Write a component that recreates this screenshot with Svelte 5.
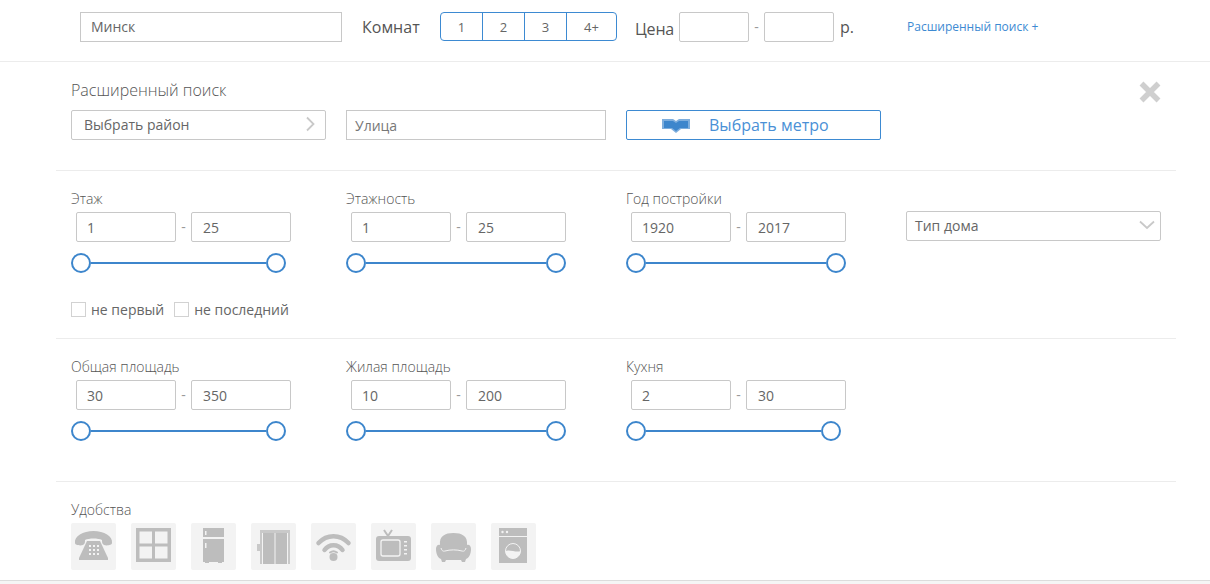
<script>
  const row1 = [
    { label: 'Этаж', from: '1', to: '25', size: 'sm' },
    { label: 'Этажность', from: '1', to: '25', size: 'lg' },
    { label: 'Год постройки', from: '1920', to: '2017', size: 'lg' }
  ];
  const row2 = [
    { label: 'Общая площадь', from: '30', to: '350', size: 'sm' },
    { label: 'Жилая площадь', from: '10', to: '200', size: 'lg' },
    { label: 'Кухня', from: '2', to: '30', size: 'sm' }
  ];
</script>

{#snippet range(f)}
  <div class="field">
    <div class="flabel">{f.label}</div>
    <div class="pair">
      <div class="box num">{f.from}</div>
      <span class="dash">-</span>
      <div class="box num">{f.to}</div>
    </div>
    <div class="slider {f.size}">
      <span class="knob"></span><span class="line"></span><span class="knob"></span>
    </div>
  </div>
{/snippet}

<div class="page">
  <header class="top">
    <div class="box city">Минск</div>
    <span class="big rooms">Комнат</span>
    <div class="group">
      <span>1</span><span>2</span><span>3</span><span>4+</span>
    </div>
    <span class="big price">Цена</span>
    <div class="box pricebox"></div>
    <span class="dash pdash">-</span>
    <div class="box pricebox"></div>
    <span class="big rub">р.</span>
    <a class="adv" href="#top">Расширенный поиск +</a>
  </header>

  <main class="panel">
    <section class="s-head">
      <div class="title">Расширенный поиск</div>
      <svg class="close" viewBox="0 0 22 22" width="22" height="22" aria-hidden="true">
        <path d="M2.500 2.500L19.500 19.500M19.500 2.500L2.500 19.500" stroke="#cfcfcf" stroke-width="5.500" fill="none"/>
      </svg>
      <div class="grid">
        <div class="box sel district">Выбрать район
          <svg viewBox="0 0 10 16" width="10" height="16" aria-hidden="true"><path d="M2 1.500L8.500 8L2 14.500" fill="none" stroke="#c9c9c9" stroke-width="1.800"/></svg>
        </div>
        <div class="box street">Улица</div>
        <div class="metro">
          <svg viewBox="0 0 28 15" width="28" height="15" aria-hidden="true">
            <path d="M0 1H11L14 3L17 1H28V11H19L14 15L9 11H0Z" fill="#7eaedd"/>
            <path d="M2 3H11L14 5L17 3H26V10H18L14 13L10 10H2Z" fill="#3d86cc"/>
          </svg>
          <span>Выбрать метро</span>
        </div>
      </div>
    </section>

    <section class="s-floors">
      <div class="grid">
        {#each row1 as f}{@render range(f)}{/each}
        <div class="box sel house">Тип дома
          <svg viewBox="0 0 16 10" width="16" height="10" aria-hidden="true"><path d="M1 1.500L8 8L15 1.500" fill="none" stroke="#c9c9c9" stroke-width="1.800"/></svg>
        </div>
      </div>
      <div class="checks">
        <span class="check"><i></i>не первый</span>
        <span class="check"><i></i>не последний</span>
      </div>
    </section>

    <section class="s-area">
      <div class="grid">
        {#each row2 as f}{@render range(f)}{/each}
      </div>
    </section>

    <section class="s-amen">
      <div class="flabel">Удобства</div>
      <div class="icons">
        <span class="ic"><svg viewBox="0 0 45 47" aria-hidden="true">
          <path d="M4 20C3 13 12 8 22.500 8S42 13 41 20C41 22 36 23 33 22C31 21 31 19 31 17C27 15 18 15 14 17C14 19 14 21 12 22C9 23 4 22 4 20Z" fill="#bdbdbd"/>
          <path d="M16 18H29L37 35V37H8V35Z" fill="#bdbdbd"/>
          <g fill="#f3f3f3"><rect x="18" y="22" width="2" height="2"/><rect x="22" y="22" width="2" height="2"/><rect x="26" y="22" width="2" height="2"/><rect x="18" y="26" width="2" height="2"/><rect x="22" y="26" width="2" height="2"/><rect x="26" y="26" width="2" height="2"/><rect x="18" y="30" width="2" height="2"/><rect x="22" y="30" width="2" height="2"/><rect x="26" y="30" width="2" height="2"/></g>
        </svg></span>
        <span class="ic"><svg viewBox="0 0 45 47" aria-hidden="true">
          <path fill-rule="evenodd" d="M5 5H40V39H5ZM8.500 8.500V20.500H21V8.500ZM24 8.500V20.500H36.500V8.500ZM8.500 23.500V35.500H21V23.500ZM24 23.500V35.500H36.500V23.500Z" fill="#bdbdbd"/>
        </svg></span>
        <span class="ic"><svg viewBox="0 0 45 47" aria-hidden="true">
          <path d="M12 5H33V14H12Z" fill="#bdbdbd"/>
          <path d="M12 16H33V39H31V40H27V39H18V40H14V39H12Z" fill="#bdbdbd"/>
          <rect x="14" y="8" width="1.500" height="4" fill="#f3f3f3"/><rect x="14" y="20" width="1.500" height="5" fill="#f3f3f3"/>
        </svg></span>
        <span class="ic"><svg viewBox="0 0 45 47" aria-hidden="true">
          <path d="M9 7H39V41H37V10H11V41H9Z" fill="#c9c9c9"/>
          <path d="M12 10H23.500V41H12ZM24.500 10H36V41H24.500Z" fill="#bdbdbd"/>
          <rect x="6" y="21" width="3" height="7" fill="#c9c9c9"/>
        </svg></span>
        <span class="ic"><svg viewBox="0 0 45 47" aria-hidden="true">
          <g fill="none" stroke="#bdbdbd" stroke-width="4.500" stroke-linecap="round">
            <path d="M7.500 20C16 11 29 11 37.500 20"/><path d="M13.500 27C18 20.500 27 20.500 31.500 27"/>
          </g>
          <circle cx="22.500" cy="34" r="4" fill="#bdbdbd"/>
          <path d="M19 29.500C21 28 24 28 26 29.500" fill="none" stroke="#bdbdbd" stroke-width="2" stroke-linecap="round"/>
        </svg></span>
        <span class="ic"><svg viewBox="0 0 45 47" aria-hidden="true">
          <path d="M13 7L17 13L21 7" fill="none" stroke="#bdbdbd" stroke-width="2"/>
          <rect x="5" y="13" width="35" height="25" rx="3" fill="#bdbdbd"/>
          <rect x="10" y="17" width="19" height="16" rx="2" fill="none" stroke="#f3f3f3" stroke-width="1.300"/>
          <g fill="#f3f3f3"><rect x="33" y="18" width="3" height="1.500"/><rect x="33" y="22" width="3" height="1.500"/><rect x="33" y="26" width="3" height="1.500"/><rect x="33" y="30" width="3" height="1.500"/></g>
        </svg></span>
        <span class="ic"><svg viewBox="0 0 45 47" aria-hidden="true">
          <path d="M9 22C8 13 14 10 22.500 10S37 13 36 22C38 21 40 23 40 26C40 31 38 35 35 36L34 39H31L30 37H15L14 39H11L10 36C7 35 5 31 5 26C5 23 7 21 9 22Z" fill="#bdbdbd"/>
          <path d="M10 25C11 28 12 28.500 14 28C19 26.500 26 26.500 31 28C33 28.500 34 28 35 25" fill="none" stroke="#f3f3f3" stroke-width="1"/>
        </svg></span>
        <span class="ic"><svg viewBox="0 0 45 47" aria-hidden="true">
          <rect x="8" y="5" width="28" height="8" fill="#bdbdbd"/>
          <rect x="8" y="14" width="28" height="26" fill="#bdbdbd"/>
          <circle cx="11.500" cy="9" r="1.200" fill="#f3f3f3"/><circle cx="16" cy="9" r="1.200" fill="#f3f3f3"/>
          <circle cx="22" cy="28" r="7.500" fill="#bdbdbd" stroke="#f3f3f3" stroke-width="1"/>
          <path d="M14.500 28C18 26 26 30 29.500 28A7.500 7.500 0 0 1 14.500 28Z" fill="#f3f3f3"/>
        </svg></span>
      </div>
    </section>
  </main>
  <div class="foot"></div>
</div>

<style>
  :global(body) {
    margin: 0;
    background: #fff;
  }
  .page {
    width: 1210px;
    height: 584px;
    overflow: hidden;
    font-family: "Open Sans", "Noto Sans", sans-serif;
    color: #555;
    font-size: 14px;
  }
  .top {
    height: 61px;
    border-bottom: 1px solid #ececec;
    display: flex;
    align-items: flex-start;
    padding-left: 80px;
  }
  .top > * {
    margin-top: 12px;
  }
  .box {
    box-sizing: border-box;
    height: 30px;
    border: 1px solid #c8c8c8;
    display: flex;
    align-items: center;
    background: #fff;
    border-radius: 2px;
    color: #666;
  }
  .city {
    width: 262px;
    padding: 0 0 2px 10px;
    border-radius: 0;
  }
  .big {
    font-size: 16px;
    line-height: 30px;
    color: #555;
  }
  .rooms {
    margin-left: 20px;
    width: 78px;
  }
  .group {
    display: flex;
    width: 177px;
    height: 29px;
    box-sizing: border-box;
    border: 1px solid #3d8ad2;
    border-radius: 4px;
  }
  .group span {
    box-sizing: border-box;
    width: 42px;
    text-align: center;
    line-height: 28px;
    font-size: 13px;
    color: #666;
    border-left: 1px solid #3d8ad2;
  }
  .group span:first-child {
    width: 41px;
    border-left: 0;
  }
  .group span:last-child {
    flex: 1;
  }
  .price {
    margin-left: 18px;
    width: 44px;
    line-height: 34px;
    letter-spacing: -0.200px;
  }
  .pricebox {
    width: 70px;
  }
  .dash {
    color: #999;
    text-align: center;
    width: 15px;
    line-height: 30px;
  }
  .rub {
    margin-left: 6px;
    width: 67px;
  }
  .adv {
    font-size: 12px;
    line-height: 30px;
    color: #3d8ad2;
    text-decoration: none;
  }
  .panel {
    margin-left: 56px;
    width: 1120px;
  }
  section {
    box-sizing: border-box;
    padding-left: 15px;
    border-bottom: 1px solid #ececec;
    position: relative;
  }
  .grid {
    display: grid;
    grid-template-columns: 275px 280px 280px 255px;
  }
  .s-head {
    height: 109px;
    padding-top: 18px;
  }
  .title {
    font-size: 16px;
    font-weight: 300;
    line-height: 20px;
    color: #555;
    height: 30px;
  }
  .close {
    position: absolute;
    right: 15px;
    top: 19px;
  }
  .sel {
    justify-content: space-between;
    padding: 0 10px 2px 12px;
    font-size: 14px;
  }
  .district {
    width: 255px;
  }
  .street {
    width: 260px;
    padding-left: 8px;
    color: #777;
    border-radius: 0;
  }
  .metro {
    box-sizing: border-box;
    width: 255px;
    height: 30px;
    border: 1px solid #3d8ad2;
    border-radius: 2px;
    display: flex;
    align-items: center;
    padding-left: 35px;
    gap: 19px;
    color: #4a90d6;
    font-size: 16px;
  }
  .s-floors {
    height: 168px;
    padding-top: 18px;
  }
  .s-area {
    height: 143px;
    padding-top: 18px;
  }
  .field {
    min-width: 0;
  }
  .flabel {
    font-size: 14px;
    font-weight: 300;
    line-height: 20px;
    color: #555;
  }
  .pair {
    display: flex;
    margin: 3px 0 0 5px;
  }
  .num {
    width: 100px;
    padding-left: 10px;
  }
  .pair .num:last-child {
    padding-left: 11px;
  }
  .slider {
    display: flex;
    align-items: center;
    margin-top: 11px;
  }
  .slider.sm {
    width: 215px;
  }
  .slider.lg {
    width: 220px;
  }
  .knob {
    box-sizing: border-box;
    width: 20px;
    height: 20px;
    border: 2px solid #3d86cc;
    border-radius: 50%;
    background: #fff;
  }
  .line {
    flex: 1;
    height: 2px;
    background: #3d86cc;
  }
  .house {
    margin-top: 22px;
    width: 255px;
    padding: 0 5px 2px 8px;
  }
  .checks {
    display: flex;
    gap: 10px;
    margin-top: 28px;
  }
  .check {
    display: flex;
    align-items: center;
    gap: 5px;
    line-height: 17px;
    color: #666;
  }
  .check i {
    display: block;
    box-sizing: border-box;
    width: 15px;
    height: 15px;
    border: 1px solid #d2d2d2;
  }
  .s-amen {
    border-bottom: 0;
    padding-top: 18px;
    height: 98px;
  }
  .icons {
    display: flex;
    gap: 15px;
    margin-top: 3px;
  }
  .ic {
    display: block;
    width: 45px;
    height: 47px;
    background: #f3f3f3;
    border-radius: 2px;
  }
  .ic svg {
    display: block;
    width: 45px;
    height: 47px;
  }
  .foot {
    height: 4px;
    border-top: 1px solid #dcdcdc;
    background: #f5f5f5;
  }
</style>
